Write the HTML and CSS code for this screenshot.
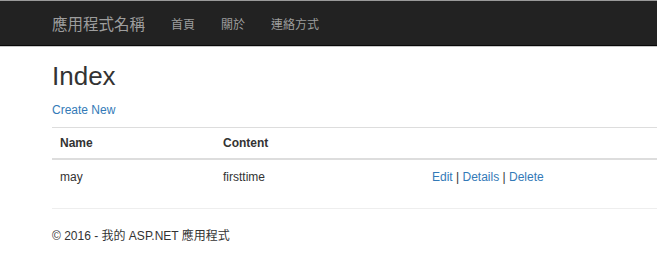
FILE: index.html
```html
<!DOCTYPE html>
<html lang="zh-TW">
<head>
  <meta charset="UTF-8" />
  <title>Index - 我的 ASP.NET 應用程式</title>
  <link rel="stylesheet" href="styles.css">
</head>
<body>

  <div class="navbar">
    <a class="brand" href="#">應用程式名稱</a>
    <ul class="nav">
      <li><a href="#">首頁</a></li>
      <li><a href="#">關於</a></li>
      <li><a href="#">連絡方式</a></li>
    </ul>
  </div>

  <div class="container">
    <h1>Index</h1>

    <p class="create"><a href="#">Create New</a></p>

    <table class="table">
      <tr>
        <th class="col-name">Name</th>
        <th class="col-content">Content</th>
        <th></th>
      </tr>
      <tr>
        <td>may</td>
        <td>firsttime</td>
        <td>
          <a href="#">Edit</a> |
          <a href="#">Details</a> |
          <a href="#">Delete</a>
        </td>
      </tr>
    </table>

    <hr />
    <footer>
      <p>&copy; 2016 - 我的 ASP.NET 應用程式</p>
    </footer>
  </div>

</body>
</html>
```

FILE: styles.css
```css
body {
  margin: 0;
  font-family: "Liberation Sans", "Noto Sans CJK TC", sans-serif;
  font-size: 12px;
  color: #333;
  background: #fff;
  border-top: 1px solid #9a9a9a;
}

a {
  color: #337ab7;
  text-decoration: none;
}

.navbar {
  display: flex;
  align-items: center;
  height: 44px;
  padding-left: 52px;
  background-color: #222;
  border-bottom: 1px solid #080808;
  box-shadow: 0 1px 0 #c8c8c8;
}

.brand {
  font-size: 15.5px;
  color: #9d9d9d;
  margin-right: 26px;
}

.nav {
  display: flex;
  list-style: none;
  margin: 0;
  padding: 0;
  gap: 26px;
}

.nav a {
  font-size: 12px;
  color: #9d9d9d;
}

.container {
  padding-left: 52px;
}

h1 {
  font-size: 26px;
  font-weight: normal;
  margin: 14px 0 0;
  line-height: 32px;
}

.create {
  margin: 8px 0 7px;
  line-height: 20px;
}

.table {
  width: 100%;
  border-collapse: collapse;
  table-layout: fixed;
}

.table th, .table td {
  text-align: left;
  padding: 8px 8px;
  line-height: 14px;
}

.table th {
  font-weight: bold;
  border-top: 1px solid #ddd;
  border-bottom: 2px solid #ddd;
}

.table td {
  height: 18px;
}

.col-name {
  width: 147px;
}

.col-content {
  width: 193px;
}

hr {
  margin: 14px 0 0;
  border: 0;
  border-top: 1px solid #eee;
}

footer p {
  margin: 17px 0;
}
```
